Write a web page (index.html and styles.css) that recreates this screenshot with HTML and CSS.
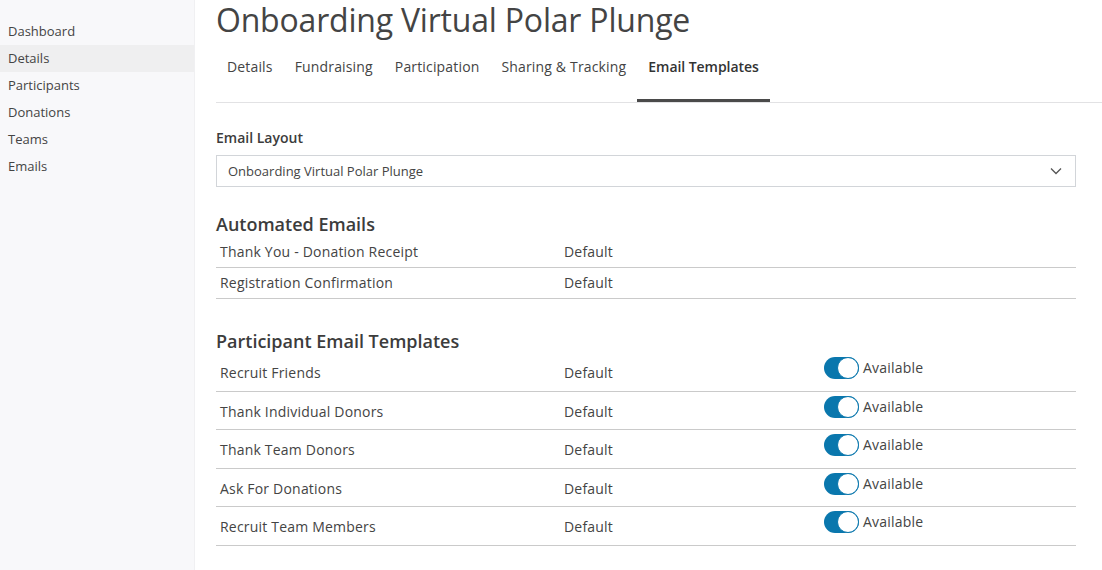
FILE: index.html
```html
<!DOCTYPE html>
<html>
<head>
<meta charset="utf-8">
<link rel="stylesheet" href="styles.css">
</head>
<body>
<div class="app">
  <nav class="sidebar">
    <a class="side-item">Dashboard</a>
    <a class="side-item active">Details</a>
    <a class="side-item">Participants</a>
    <a class="side-item">Donations</a>
    <a class="side-item">Teams</a>
    <a class="side-item">Emails</a>
  </nav>
  <main class="main">
    <h1 class="title">Onboarding Virtual Polar Plunge</h1>
    <div class="tabs">
      <span class="tab">Details</span>
      <span class="tab">Fundraising</span>
      <span class="tab">Participation</span>
      <span class="tab">Sharing &amp; Tracking</span>
      <span class="tab active">Email Templates</span>
    </div>
    <div class="content">
      <label class="field-label">Email Layout</label>
      <div class="select">
        <span>Onboarding Virtual Polar Plunge</span>
        <svg class="chev" width="12" height="8" viewBox="0 0 12 8"><path d="M1 1.5 L6 6.5 L11 1.5" fill="none" stroke="#555" stroke-width="1.3"/></svg>
      </div>

      <h2 class="section">Automated Emails</h2>
      <table class="tbl auto">
        <tr><td class="c-name">Thank You - Donation Receipt</td><td class="c-def">Default</td><td></td></tr>
        <tr><td class="c-name">Registration Confirmation</td><td class="c-def">Default</td><td></td></tr>
      </table>

      <h2 class="section sec2">Participant Email Templates</h2>
      <table class="tbl part">
        <tr><td class="c-name">Recruit Friends</td><td class="c-def">Default</td><td class="c-tog"><span class="toggle"><span class="knob"></span></span><span class="avail">Available</span></td></tr>
        <tr><td class="c-name">Thank Individual Donors</td><td class="c-def">Default</td><td class="c-tog"><span class="toggle"><span class="knob"></span></span><span class="avail">Available</span></td></tr>
        <tr><td class="c-name">Thank Team Donors</td><td class="c-def">Default</td><td class="c-tog"><span class="toggle"><span class="knob"></span></span><span class="avail">Available</span></td></tr>
        <tr><td class="c-name">Ask For Donations</td><td class="c-def">Default</td><td class="c-tog"><span class="toggle"><span class="knob"></span></span><span class="avail">Available</span></td></tr>
        <tr><td class="c-name">Recruit Team Members</td><td class="c-def">Default</td><td class="c-tog"><span class="toggle"><span class="knob"></span></span><span class="avail">Available</span></td></tr>
      </table>
    </div>
  </main>
</div>
</body>
</html>
```

FILE: styles.css
```css
* { box-sizing: border-box; }
html, body { margin: 0; padding: 0; background: #fff; }
body {
  font-family: "Open Sans", "Liberation Sans", sans-serif;
  color: #444;
  width: 1102px;
  height: 570px;
  overflow: hidden;
}
.app { display: flex; height: 570px; }
.sidebar {
  width: 195px;
  flex: none;
  background: #f8f8fa;
  border-right: 1px solid #f0f0f2;
  padding-top: 18px;
  display: flex;
  flex-direction: column;
}
.side-item {
  display: block;
  font-size: 13px;
  line-height: 27px;
  height: 27px;
  padding: 0 8px;
  color: #444;
}
.side-item.active { background: #efeff0; }

.main { flex: 1; padding-left: 21px; min-width: 0; }
.title {
  margin: 0;
  font-size: 32px;
  font-weight: 400;
  line-height: 40px;
  color: #444;
  letter-spacing: -0.2px;
}
.tabs {
  display: flex;
  border-bottom: 1px solid #e2e2e4;
  height: 63px;
}
.tab {
  font-size: 14px;
  line-height: 20px;
  padding: 17px 11px 22px;
  border-bottom: 3px solid transparent;
  color: #444;
  height: 62px;
  letter-spacing: 0.16px;
}
.tab.active {
  font-weight: 600;
  color: #333;
  border-bottom-color: #4a4a4a;
  letter-spacing: -0.05px;
}
.content { padding-right: 26px; }
.field-label {
  display: block;
  margin-top: 25px;
  font-size: 14px;
  font-weight: 600;
  line-height: 20px;
  color: #3c3c3c;
}
.select {
  margin-top: 7px;
  height: 32px;
  border: 1px solid #d2d5d9;
  display: flex;
  align-items: center;
  justify-content: space-between;
  padding: 0 13px 0 11px;
  font-size: 13px;
  color: #444;
}
.chev { display: block; }
.section {
  margin: 25px 0 1px;
  font-size: 18px;
  font-weight: 600;
  line-height: 24px;
  color: #3c3c3c;
}
.section.sec2 { margin-top: 30px; margin-bottom: 0; }
.tbl {
  width: 100%;
  border-collapse: collapse;
  table-layout: fixed;
  font-size: 14px;
  color: #444;
}
.tbl td {
  padding: 5px 4px 5px;
  line-height: 20px;
  border-bottom: 1px solid #cacaca;
  vertical-align: top;
  white-space: nowrap;
  letter-spacing: 0.2px;
}
.tbl .c-name { width: 40%; }
.tbl .c-def { width: 30%; }
.tbl.part td { padding: 10px 4px 7.5px; }
.tbl.part td.c-tog {
  padding: 4px 4px 0 6px;
}
.toggle {
  display: inline-block;
  vertical-align: middle;
  width: 35px;
  height: 22px;
  border-radius: 11px;
  background: #0a77ad;
  position: relative;
}
.knob {
  position: absolute;
  right: 0;
  top: 0;
  width: 22px;
  height: 22px;
  border-radius: 50%;
  background: #fff;
  border: 1.5px solid #0a77ad;
}
.avail {
  display: inline-block;
  vertical-align: middle;
  margin-left: 4px;
  line-height: 22px;
  font-size: 14px;
}
```
